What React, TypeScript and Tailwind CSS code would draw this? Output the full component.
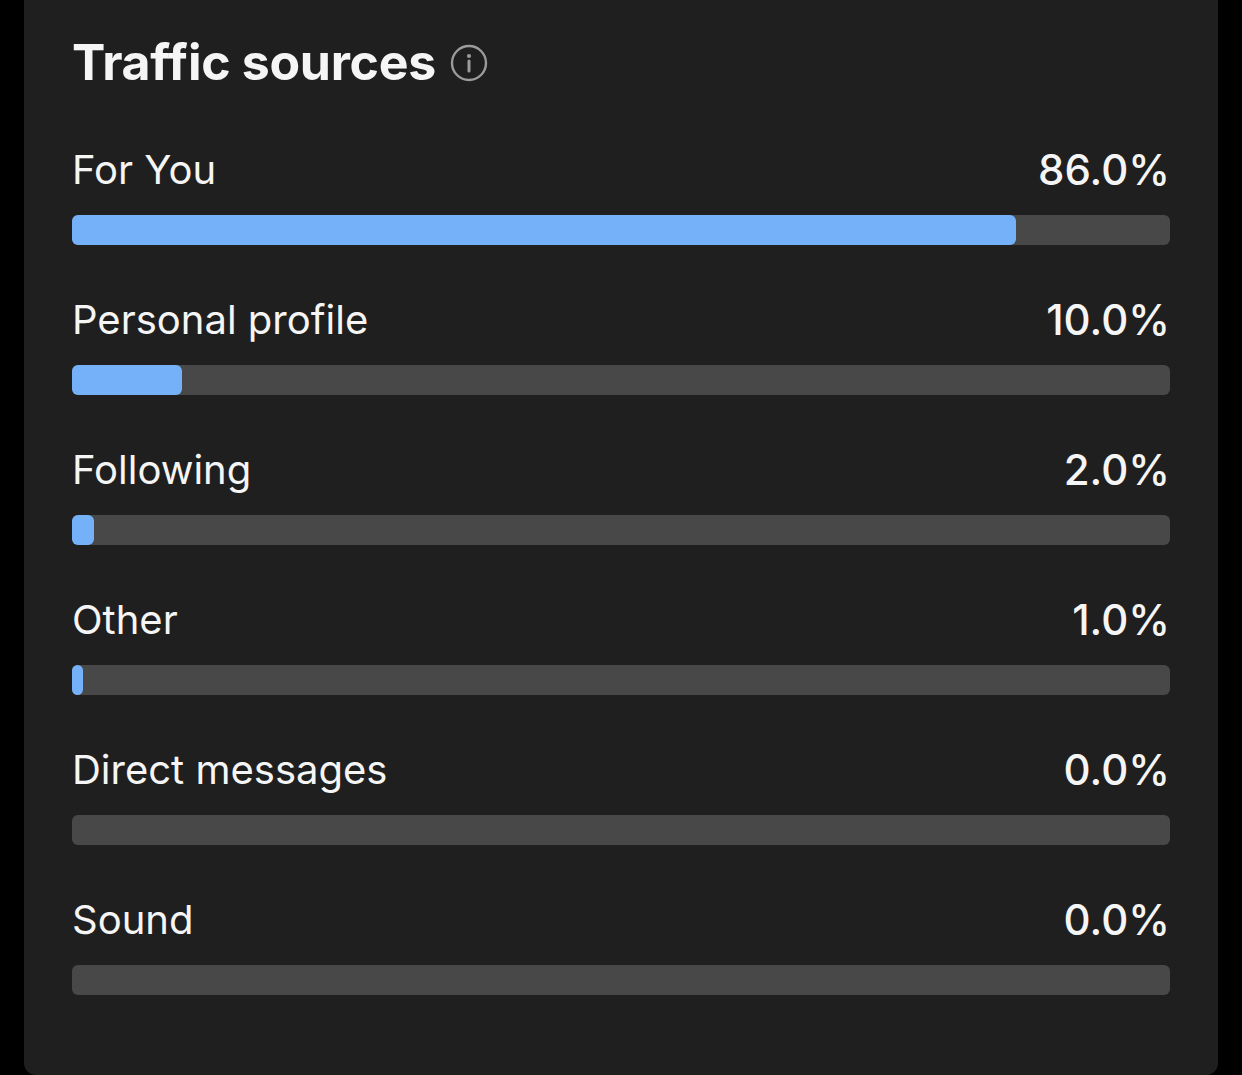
const sources = [
  { label: "For You", value: 86.0 },
  { label: "Personal profile", value: 10.0 },
  { label: "Following", value: 2.0 },
  { label: "Other", value: 1.0 },
  { label: "Direct messages", value: 0.0 },
  { label: "Sound", value: 0.0 },
]

function InfoIcon() {
  return (
    <svg width="38" height="38" viewBox="0 0 38 38" fill="none" className="ml-[14px] mt-[2px]">
      <circle cx="19" cy="19" r="17" stroke="#9b9b9b" strokeWidth="2.4" />
      <circle cx="19" cy="12" r="2.1" fill="#9b9b9b" />
      <path d="M19 17 V27" stroke="#9b9b9b" strokeWidth="3" strokeLinecap="round" />
    </svg>
  )
}

function SourceRow({ label, value }: { label: string; value: number }) {
  return (
    <div className="flex flex-col">
      <div className="flex items-center justify-between h-[50px] leading-[50px] text-[#f5f5f5]">
        <span className="text-[40px]">{label}</span>
        <span className="text-[42px] font-medium">{value.toFixed(1)}%</span>
      </div>
      <div className="mt-[20px] h-[30px] w-full rounded-[6px] bg-[#484848]">
        {value > 0 && (
          <div
            className="h-full rounded-[6px] bg-[#74b1f8]"
            style={{ width: `${value}%` }}
          />
        )}
      </div>
    </div>
  )
}

export default function App() {
  return (
    <div className="min-h-[1075px] bg-black px-[24px] font-['Inter','Liberation_Sans',sans-serif]">
      <div className="h-[1075px] rounded-b-[12px] bg-[#1f1f1f] pl-[48px] pr-[48px] pt-[30px]">
        <div className="flex items-center h-[64px]">
          <h2 className="text-[50px] font-bold leading-[64px] text-[#f5f5f5] tracking-[-0.3px]">
            Traffic sources
          </h2>
          <InfoIcon />
        </div>
        <div className="mt-[51px] flex flex-col gap-[50px]">
          {sources.map((s) => (
            <SourceRow key={s.label} label={s.label} value={s.value} />
          ))}
        </div>
      </div>
    </div>
  )
}
